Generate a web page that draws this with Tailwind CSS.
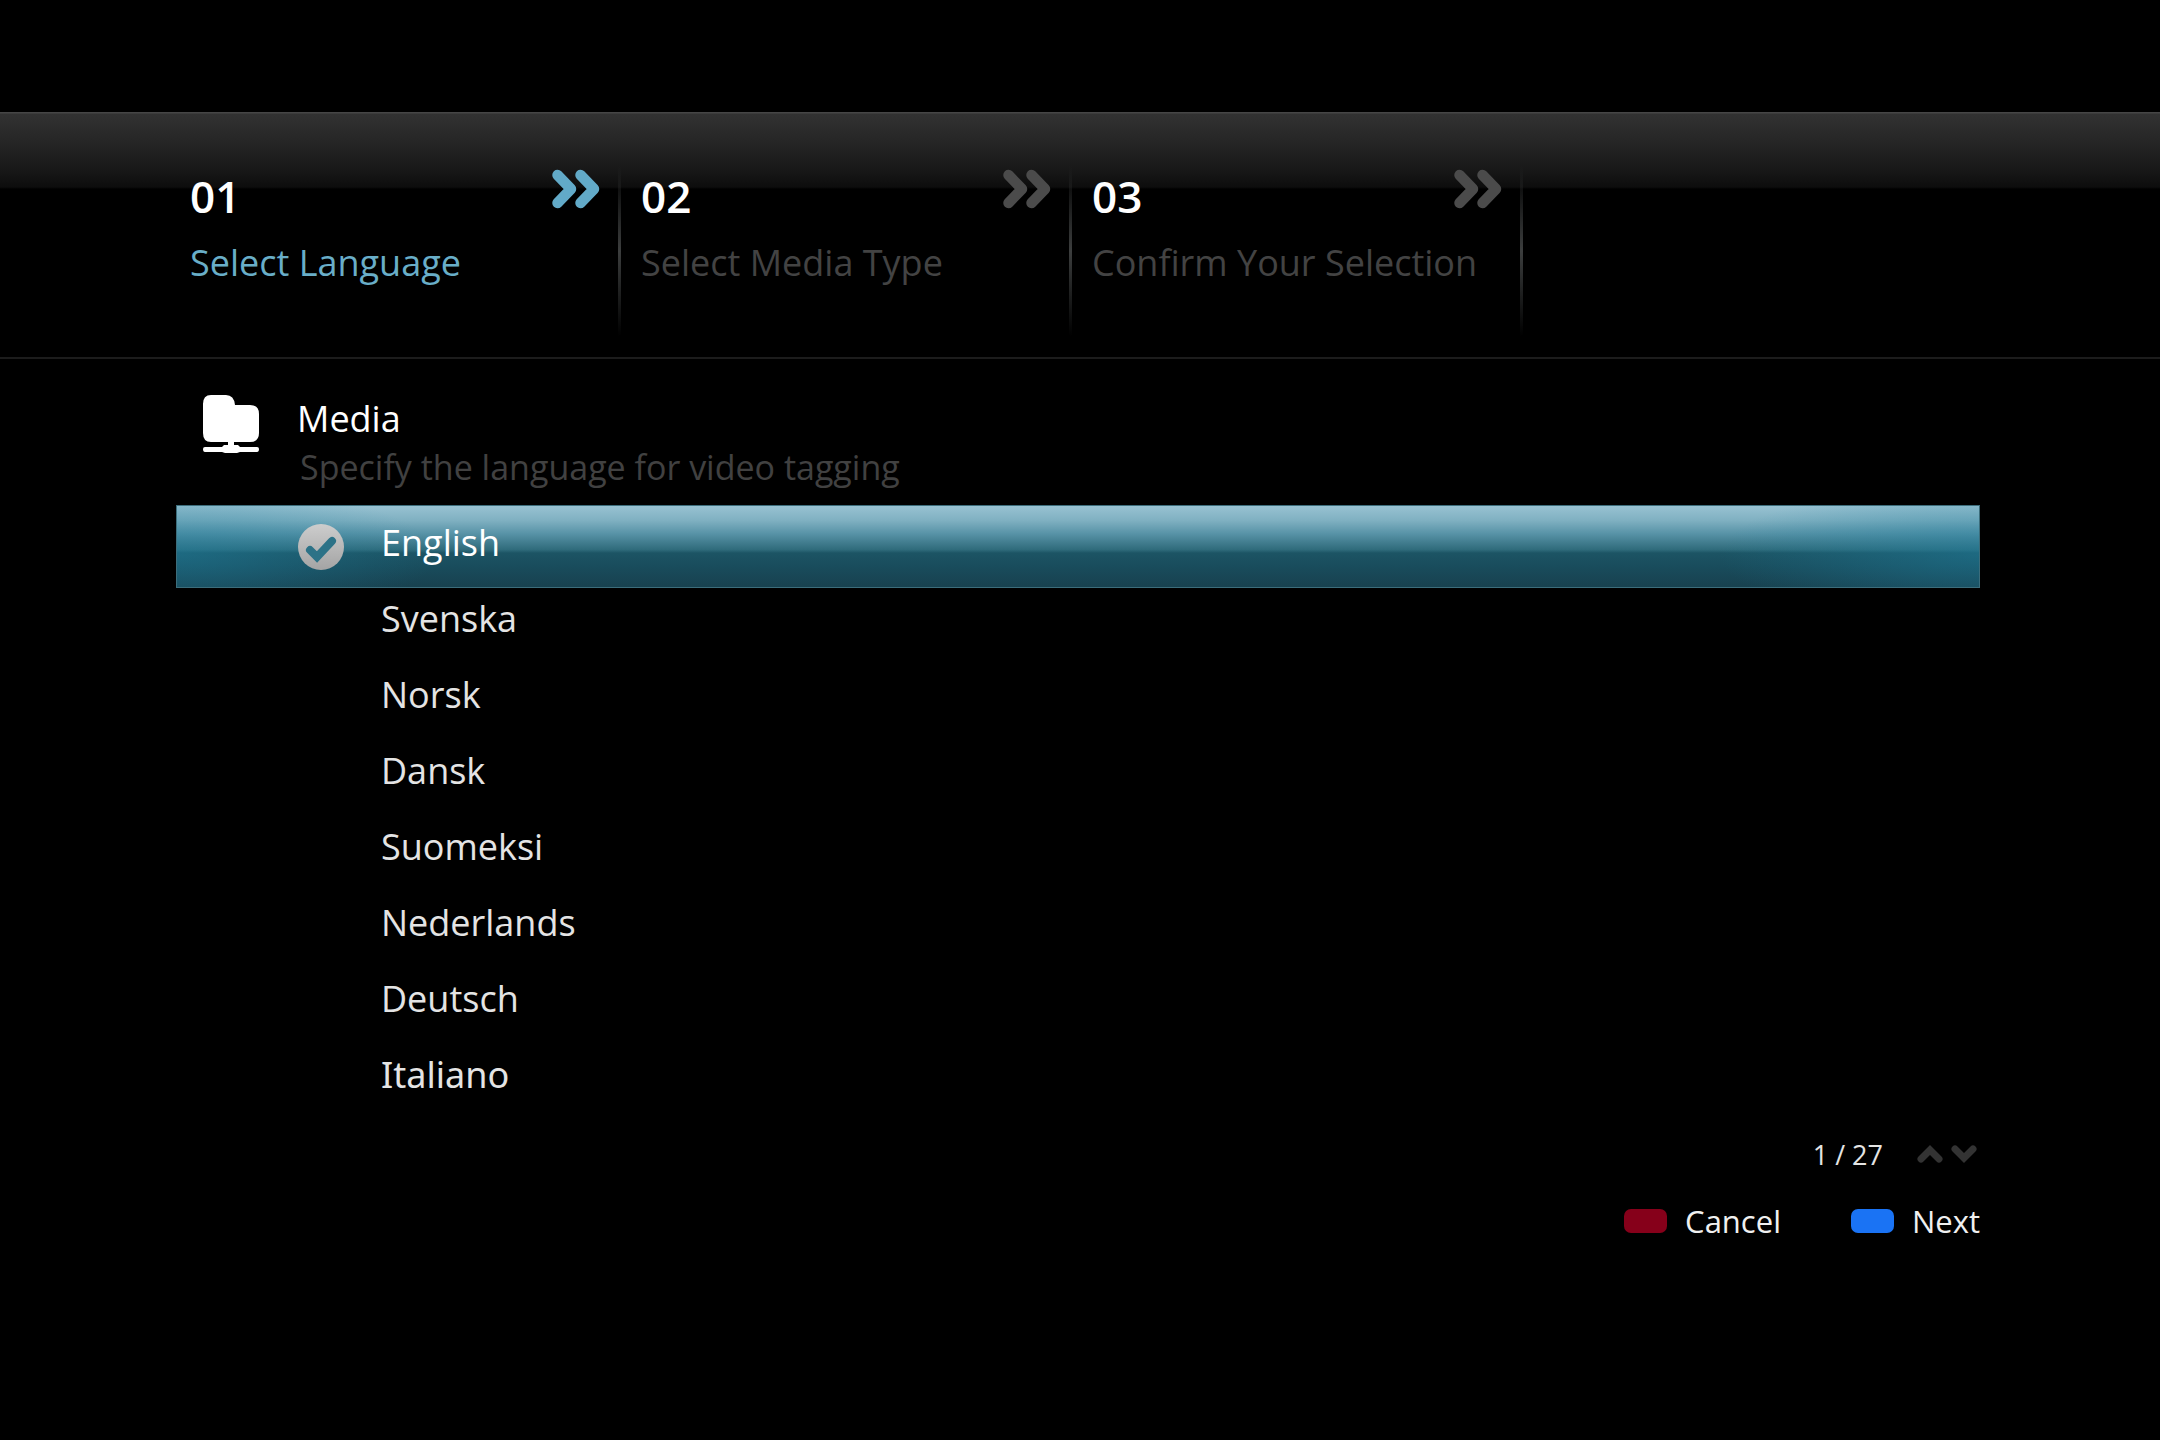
<!DOCTYPE html>
<html lang="en">
<head>
<meta charset="utf-8">
<meta name="viewport" content="width=device-width, initial-scale=1">
<title>Select Language</title>
<script src="https://cdn.jsdelivr.net/npm/@tailwindcss/browser@4"></script>
</head>
<body class="min-h-screen bg-black pt-28 font-['Open_Sans','Noto_Sans',sans-serif] text-[#e4e4e4]">
  <svg class="hidden" aria-hidden="true">
    <symbol id="chevrons" viewBox="0 0 50 40">
      <path d="M6.500 6 L20 20 L6.500 34 M29.500 6 L43 20 L29.500 34" fill="none" stroke="currentColor" stroke-width="10.500" stroke-linecap="round" stroke-linejoin="round"/>
    </symbol>
  </svg>

  <header class="border-b-2 border-[#1c1c1c] bg-[linear-gradient(to_bottom,#464646_0,#464646_1px,#323232_2px,#222222_38px,#181818_58px,#0d0d0d_75px,#000000_77px)]">
    <ol class="grid grid-cols-4 pt-[54px] pr-[186px] pb-[21px] pl-[170px]">
      <li class="flex" aria-current="step">
        <div class="grow pl-5">
          <div class="flex items-start justify-between pr-[17px]">
            <span class="text-[44px] leading-[60px] font-semibold text-white">01</span>
            <svg class="mt-[3px] h-10 w-[50px] text-[#62aac8]" aria-hidden="true"><use href="#chevrons"/></svg>
          </div>
          <p class="mt-[13px] text-[36px] leading-[48px] whitespace-nowrap text-[#69aec8]">Select Language</p>
        </div>
        <div class="h-[170px] w-[3px] bg-linear-to-b from-transparent via-[#3c3e3e] to-transparent"></div>
      </li>
      <li class="flex">
        <div class="grow pl-5">
          <div class="flex items-start justify-between pr-[17px]">
            <span class="text-[44px] leading-[60px] font-semibold text-white">02</span>
            <svg class="mt-[3px] h-10 w-[50px] text-[#4b4b4b]" aria-hidden="true"><use href="#chevrons"/></svg>
          </div>
          <p class="mt-[13px] text-[36px] leading-[48px] whitespace-nowrap text-[#434343]">Select Media Type</p>
        </div>
        <div class="h-[170px] w-[3px] bg-linear-to-b from-transparent via-[#3c3e3e] to-transparent"></div>
      </li>
      <li class="flex">
        <div class="grow pl-5">
          <div class="flex items-start justify-between pr-[17px]">
            <span class="text-[44px] leading-[60px] font-semibold text-white">03</span>
            <svg class="mt-[3px] h-10 w-[50px] text-[#4b4b4b]" aria-hidden="true"><use href="#chevrons"/></svg>
          </div>
          <p class="mt-[13px] text-[36px] leading-[48px] whitespace-nowrap text-[#434343]">Confirm Your Selection</p>
        </div>
        <div class="h-[170px] w-[3px] bg-linear-to-b from-transparent via-[#3c3e3e] to-transparent"></div>
      </li>
    </ol>
  </header>

  <main class="pt-9 pr-[180px] pl-44">
    <div class="flex items-start">
      <svg class="ml-[26px] h-[60px] w-[58px] text-white" viewBox="0 0 58 60" fill="currentColor" aria-hidden="true">
        <path d="M9 0H24Q32 0 33 10H48Q57 10 57 19V38Q57 47 48 47H9Q1 47 1 38V9Q1 0 9 0Z"/>
        <path d="M26 46H32V50H36L38 52H55Q57 52 57 54Q57 57 55 57H38L35 58H23L20 57H3Q1 57 1 54Q1 52 3 52H20L22 50H26Z"/>
      </svg>
      <div class="ml-[37px]">
        <h1 class="text-[36px] leading-[48px] text-white">Media</h1>
        <p id="hint" class="pl-[3px] text-[34px] leading-[48px] text-[#414141]">Specify the language for video tagging</p>
      </div>
    </div>

    <form>
      <div role="radiogroup" aria-labelledby="hint" class="mt-[14px] text-[36px] leading-[76px]">
        <label class="-mb-[7px] flex h-[83px] border border-[#3c6d7b] bg-[radial-gradient(ellipse_260px_70px_at_0_60%,#1f7f9e80,#1f7f9e00),radial-gradient(ellipse_260px_70px_at_100%_60%,#1f7f9e80,#1f7f9e00),linear-gradient(to_bottom,#98c2d2_0,#7fb0c1_18%,#5893a7_34%,#2f6b7b_54%,#1c5464_58%,#194c5c_75%,#18414f_100%)]">
          <span class="grid w-[204px] place-items-center pl-[84px]">
            <input type="radio" name="language" value="en" checked class="col-start-1 row-start-1 size-[46px] appearance-none rounded-full bg-linear-to-b from-[#cdcdcd] to-[#a4a4a4]">
            <svg class="col-start-1 row-start-1 size-[46px]" viewBox="0 0 46 46" aria-hidden="true"><path d="M12 26 L19 33 L34 17" fill="none" stroke="#2c7287" stroke-width="8" stroke-linecap="round" stroke-linejoin="miter"/></svg>
          </span>
          <span class="-mt-px text-white">English</span>
        </label>
        <label class="flex"><input type="radio" name="language" value="sv" class="w-[205px] appearance-none">Svenska</label>
        <label class="flex"><input type="radio" name="language" value="no" class="w-[205px] appearance-none">Norsk</label>
        <label class="flex"><input type="radio" name="language" value="da" class="w-[205px] appearance-none">Dansk</label>
        <label class="flex"><input type="radio" name="language" value="fi" class="w-[205px] appearance-none">Suomeksi</label>
        <label class="flex"><input type="radio" name="language" value="nl" class="w-[205px] appearance-none">Nederlands</label>
        <label class="flex"><input type="radio" name="language" value="de" class="w-[205px] appearance-none">Deutsch</label>
        <label class="flex font-['Noto_Sans',sans-serif]"><input type="radio" name="language" value="it" class="w-[205px] appearance-none">Italiano</label>
      </div>

      <div class="mt-[18px] flex items-center justify-end pr-[3px] text-[27px] leading-[48px]">
        <span class="mr-[34px]">1 / 27</span>
        <button type="button" aria-label="Previous page" class="mr-2 text-[#333333]">
          <svg class="-mt-[2px] h-[18px] w-[26px]" viewBox="0 0 26 18" aria-hidden="true"><path d="M4 14 L13 5 L22 14" fill="none" stroke="currentColor" stroke-width="7" stroke-linecap="round"/></svg>
        </button>
        <button type="button" aria-label="Next page" class="text-[#333333]">
          <svg class="-mt-[2px] h-[18px] w-[26px]" viewBox="0 0 26 18" aria-hidden="true"><path d="M4 4 L13 13 L22 4" fill="none" stroke="currentColor" stroke-width="7" stroke-linecap="round"/></svg>
        </button>
      </div>

      <div class="mt-[18px] flex justify-end gap-[70px] text-[31px] leading-[48px] text-[#f0f0f0]">
        <button type="button" class="flex items-center gap-[18px]"><span class="h-6 w-[43px] rounded-[7px] bg-[#86001a]"></span>Cancel</button>
        <button type="submit" class="flex items-center gap-[18px]"><span class="h-6 w-[43px] rounded-[7px] bg-[#1a73f4]"></span>Next</button>
      </div>
    </form>
  </main>
</body>
</html>
